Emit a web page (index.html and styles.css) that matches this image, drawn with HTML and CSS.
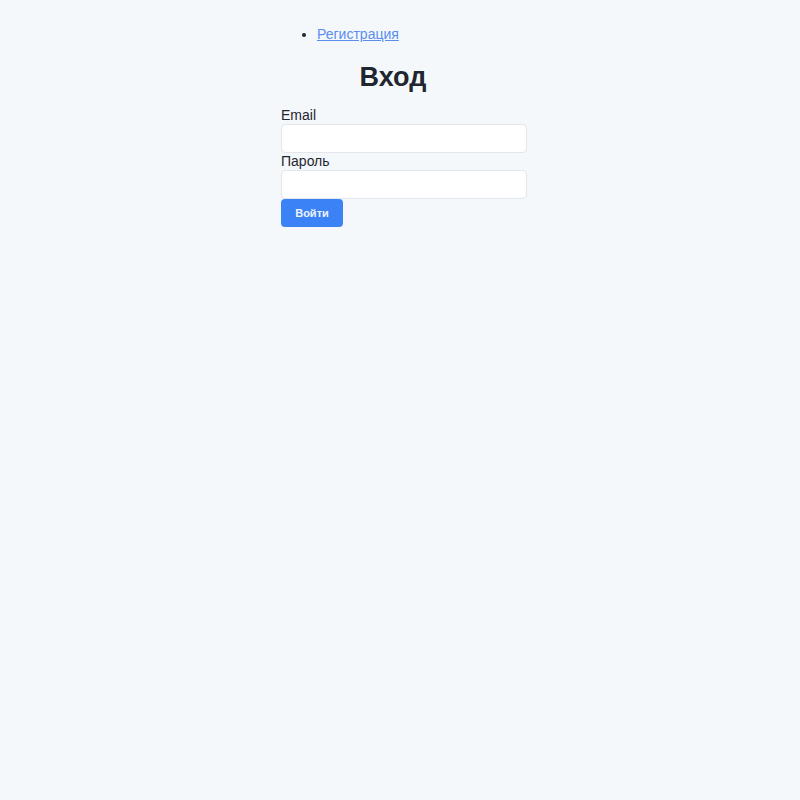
FILE: index.html
```html
<!DOCTYPE html>
<html lang="ru">
<head>
<meta charset="utf-8">
<title>Вход</title>
<link rel="stylesheet" href="styles.css">
</head>
<body>
<div class="page">
  <ul class="nav">
    <li><a href="#">Регистрация</a></li>
  </ul>
  <h1 class="title">Вход</h1>
  <form class="form">
    <label class="label" for="email">Email</label>
    <input class="input" id="email" type="email">
    <label class="label" for="password">Пароль</label>
    <input class="input" id="password" type="password">
    <button class="btn" type="button">Войти</button>
  </form>
</div>
</body>
</html>
```
FILE: styles.css
```css
html, body {
  margin: 0;
  padding: 0;
  background: #f5f8fb;
  font-family: "Liberation Sans", Arial, sans-serif;
  color: #1f2630;
}
.page {
  width: 246px;
  margin: 0 auto;
  padding-left: 8px;
  padding-top: 25px;
}
.nav {
  margin: 0;
  padding-left: 36px;
  font-size: 14px;
  line-height: 18px;
}
.nav a {
  color: #5b8def;
}
.title {
  margin: 18px 0 14px;
  padding-right: 22px;
  text-align: center;
  font-size: 27px;
  line-height: 32px;
  font-weight: bold;
  color: #1f2630;
}
.form {
  display: flex;
  flex-direction: column;
  align-items: flex-start;
}
.label {
  font-size: 14px;
  line-height: 17px;
}
.input {
  box-sizing: border-box;
  width: 246px;
  height: 29px;
  margin: 0;
  border: 1px solid #e3e6ea;
  border-radius: 4px;
  background: #fff;
}
.btn {
  width: 62px;
  height: 28px;
  border: none;
  border-radius: 4px;
  background: #3b82f6;
  color: #eef4ff;
  font-family: "Liberation Sans", Arial, sans-serif;
  font-size: 11px;
  font-weight: bold;
  padding: 0;
}
```
